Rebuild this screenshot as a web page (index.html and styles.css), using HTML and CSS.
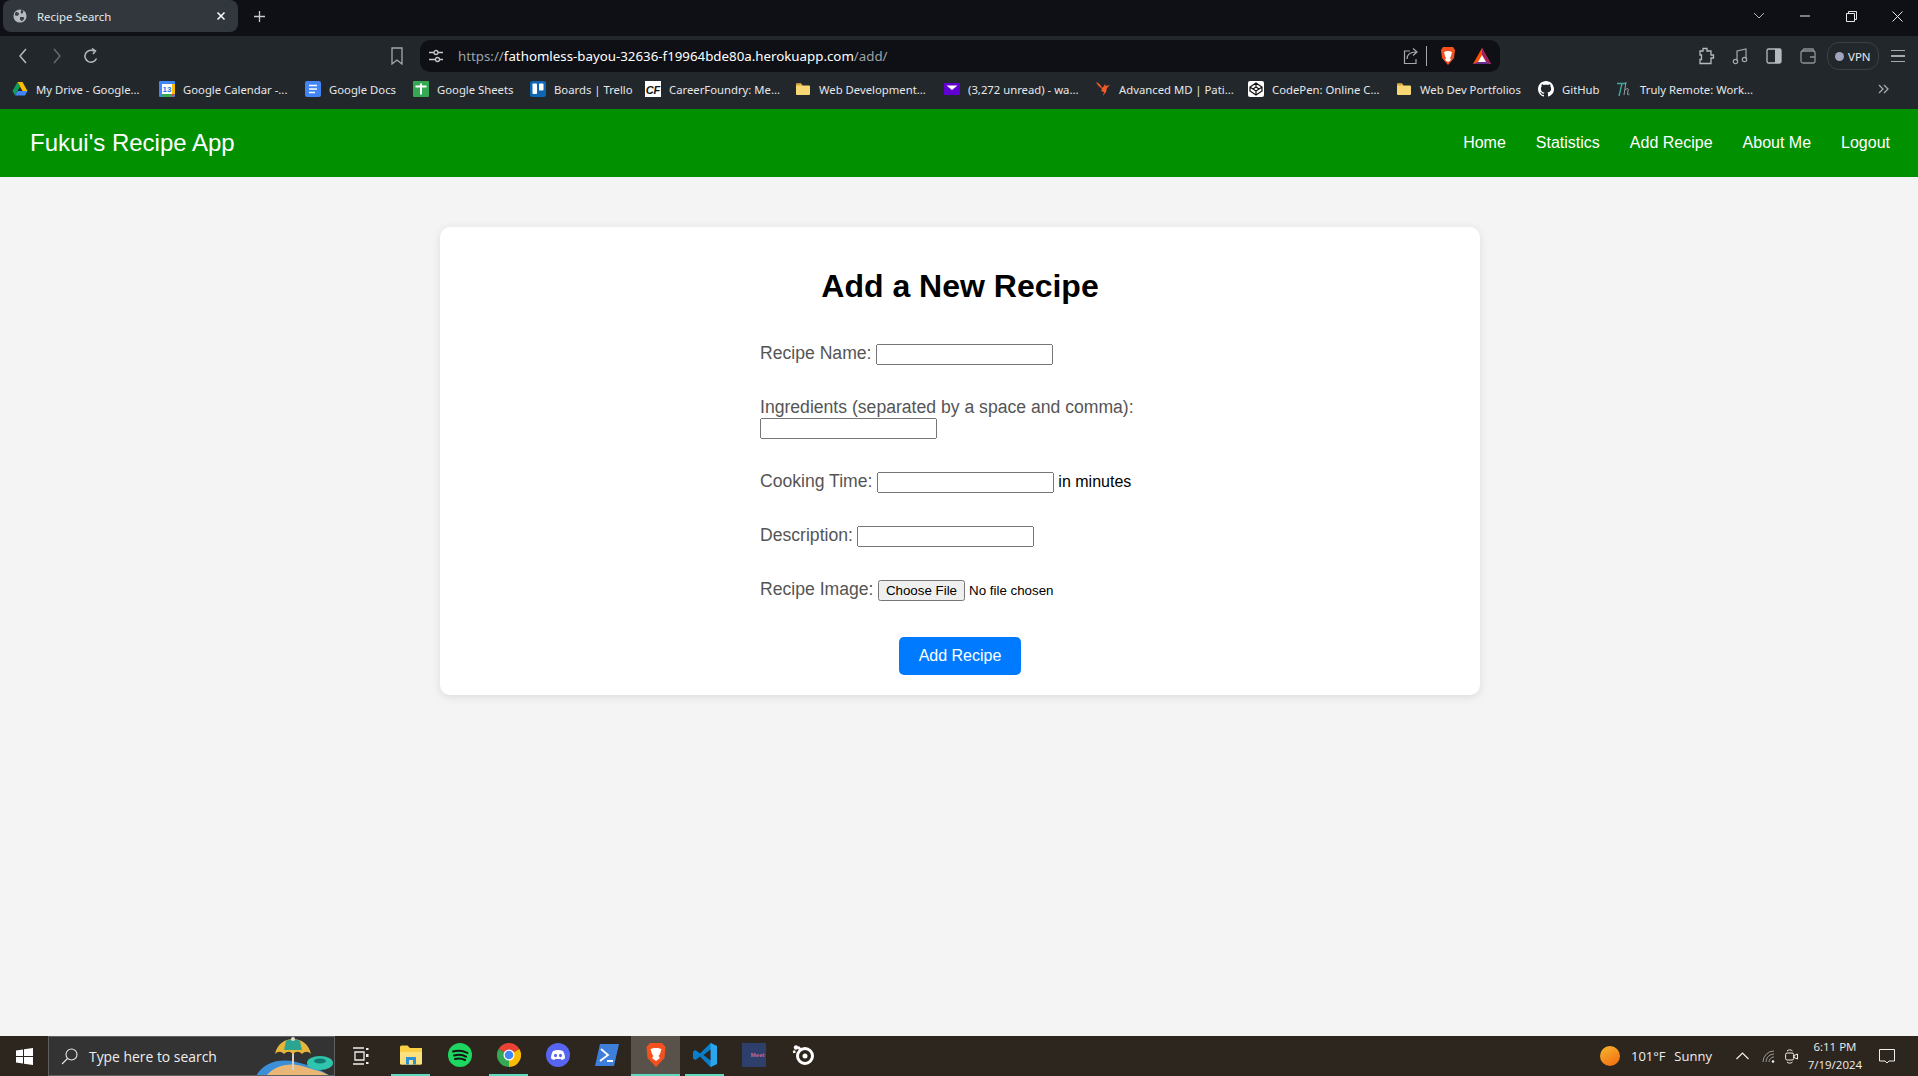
FILE: index.html
```html
<!DOCTYPE html>
<html lang="en">
<head>
    <meta charset="UTF-8">
    <meta name="viewport" content="width=device-width, initial-scale=1.0">
    <title>Recipe Search</title>
    <link rel="stylesheet" href="styles.css">
</head>
<body>

<div class="browser-top">
    <div class="tab-strip">
        <div class="tab">
            <svg class="tab-globe" viewBox="0 0 16 16"><circle cx="8" cy="8" r="7.500" fill="#b5bac0"/><path d="M3 3l3 1 1 2-2 2-3-1zM9 1l3 1-1 3-2 0zM8 9l4 0 1 2-3 3-2-2z" fill="#3a4046"/></svg>
            <span class="tab-title">Recipe Search</span>
            <svg class="tab-close" viewBox="0 0 10 10"><path d="M1.500 1.500l7 7M8.500 1.500l-7 7" stroke="#fff" stroke-width="1.500"/></svg>
        </div>
        <svg class="new-tab" viewBox="0 0 12 12"><path d="M6 0v12M0 6h12" stroke="#c8ccd0" stroke-width="1.400"/></svg>
        <div class="win-controls">
            <span class="win-btn"><svg width="12" height="8" viewBox="0 0 12 8"><path d="M1 1l5 5 5-5" fill="none" stroke="#b5b8bc" stroke-width="1"/></svg></span>
            <span class="win-btn"><svg width="10" height="2" viewBox="0 0 10 2"><path d="M0 1h10" stroke="#e8e8e8"/></svg></span>
            <span class="win-btn"><svg width="11" height="11" viewBox="0 0 11 11"><path d="M.5 2.500h8v8h-8zM2.500 2.500v-2h8v8h-2" fill="none" stroke="#e8e8e8"/></svg></span>
            <span class="win-btn"><svg width="11" height="11" viewBox="0 0 11 11"><path d="M.5.500l10 10M10.500.500l-10 10" stroke="#e8e8e8"/></svg></span>
        </div>
    </div>

    <div class="toolbar">
        <div class="nav-buttons">
            <span class="tool-btn"><svg width="10" height="16" viewBox="0 0 10 16"><path d="M8 1L2 8l6 7" fill="none" stroke="#b5bac0" stroke-width="1.500"/></svg></span>
            <span class="tool-btn"><svg width="10" height="16" viewBox="0 0 10 16"><path d="M2 1l6 7-6 7" fill="none" stroke="#666b70" stroke-width="1.500"/></svg></span>
            <span class="tool-btn"><svg width="16" height="16" viewBox="0 0 16 16"><path d="M13.500 10.500A6 6 0 1 1 11 3" fill="none" stroke="#b5bac0" stroke-width="1.500"/><path d="M9 .5l3.500 2.500L10 6" fill="none" stroke="#b5bac0" stroke-width="1.500"/></svg></span>
        </div>
        <span class="bookmark-btn"><svg width="12" height="18" viewBox="0 0 12 18"><path d="M1 1h10v16l-5-4-5 4z" fill="none" stroke="#a4a9ae" stroke-width="1.300"/></svg></span>
        <div class="address-bar">
            <svg class="site-settings" width="14" height="14" viewBox="0 0 14 14"><path d="M0 3.500h5M9 3.500h5M0 10.500h6M10 10.500h4" stroke="#c4c8cc" stroke-width="1.300"/><circle cx="7" cy="3.500" r="2" fill="none" stroke="#c4c8cc" stroke-width="1.300"/><circle cx="8.500" cy="10.500" r="2" fill="none" stroke="#c4c8cc" stroke-width="1.300"/></svg>
            <span class="url"><span class="url-dim">https://</span>fathomless-bayou-32636-f19964bde80a.herokuapp.com<span class="url-dim">/add/</span></span>
            <svg class="share" width="16" height="18" viewBox="0 0 16 18"><path d="M7 4H1.500v12.500H13V12" fill="none" stroke="#a4a9ae" stroke-width="1.200"/><path d="M4 12c0-5 4-7 9-7M10 1.500l4 3.500-4 3.500" fill="none" stroke="#a4a9ae" stroke-width="1.200"/></svg>
            <span class="addr-sep"></span>
            <svg class="brave-small" width="16" height="20" viewBox="0 0 16 20"><path d="M3 1h10l2 3-1 8-6 7-6-7-1-8z" fill="#f4511e"/><path d="M4 6l3-1h2l3 1-1 4-1 2 1 2-3 2-3-2 1-2-1-2z" fill="#fff"/></svg>
            <svg class="bat" width="18" height="17" viewBox="0 0 18 17"><path d="M9 0l9 16H0z" fill="#ff5000"/><path d="M9 0l9 16-5-2-4-7z" fill="#9e1f63"/><path d="M9 7l4 7H5z" fill="#fff"/><path d="M0 16l5-2h8l5 2z" fill="#662d91"/></svg>
        </div>
        <div class="tool-right">
            <span class="tool-icon"><svg width="17" height="18" viewBox="0 0 17 18"><path d="M2 4h3V1.500h4V4h4v4h2.500v3H13v5.500H2v-4h1.500V8H2z" fill="none" stroke="#b5bac0" stroke-width="1.300"/></svg></span>
            <span class="tool-icon"><svg width="16" height="18" viewBox="0 0 16 18"><path d="M5 14V4l9-2v10" fill="none" stroke="#a4a9ae" stroke-width="1.200"/><circle cx="3.500" cy="14.500" r="2.200" fill="none" stroke="#a4a9ae" stroke-width="1.200"/><circle cx="12.500" cy="12.500" r="2.200" fill="none" stroke="#a4a9ae" stroke-width="1.200"/></svg></span>
            <span class="tool-icon"><svg width="16" height="16" viewBox="0 0 16 16"><rect x="1" y="1" width="14" height="14" rx="1.500" fill="none" stroke="#b5bac0" stroke-width="1.300"/><rect x="9" y="1" width="6" height="14" fill="#b5bac0"/></svg></span>
            <span class="tool-icon"><svg width="16" height="16" viewBox="0 0 16 16"><rect x="1" y="3" width="14" height="12" rx="2" fill="none" stroke="#8d9297" stroke-width="1.300"/><path d="M2 3l2-2h9l1 2M10 9h5" fill="none" stroke="#8d9297" stroke-width="1.300"/></svg></span>
            <span class="vpn"><span class="vpn-dot"></span>VPN</span>
            <span class="menu-icon"><span></span><span></span><span></span></span>
        </div>
    </div>

    <div class="bookmarks">
        <div class="bm">
            <svg viewBox="0 0 16 16"><path d="M5.500 1h5l5 9h-5z" fill="#fbbc04"/><path d="M5.500 1L.5 10 3 14.500 8 5.500z" fill="#0f9d58"/><path d="M3 14.500h10l2.500-4.500H5.500z" fill="#4285f4"/></svg>
            <span>My Drive - Google...</span>
        </div>
        <div class="bm">
            <svg viewBox="0 0 16 16"><rect width="16" height="16" rx="1" fill="#4285f4"/><rect x="3" y="3" width="10" height="10" fill="#fff"/><rect x="13" y="3" width="3" height="10" fill="#fbbc04"/><rect x="3" y="13" width="10" height="3" fill="#34a853"/><path d="M13 13h3l-3 3z" fill="#ea4335"/><text x="8" y="11" class="cal-num">13</text></svg>
            <span>Google Calendar -...</span>
        </div>
        <div class="bm">
            <svg viewBox="0 0 16 16"><rect width="16" height="16" rx="2" fill="#4285f4"/><path d="M4 4.500h8M4 8h8M4 11.500h6" stroke="#fff" stroke-width="1.600"/></svg>
            <span>Google Docs</span>
        </div>
        <div class="bm">
            <svg viewBox="0 0 16 16"><rect width="16" height="16" rx="1" fill="#34a853"/><path d="M2.500 5.500h11M8 2.500v11" stroke="#fff" stroke-width="2"/></svg>
            <span>Google Sheets</span>
        </div>
        <div class="bm">
            <svg viewBox="0 0 16 16"><rect width="16" height="16" rx="2.500" fill="#0c66b4"/><rect x="2.500" y="2.500" width="4.500" height="10.500" rx=".8" fill="#fff"/><rect x="9" y="2.500" width="4.500" height="7" rx=".8" fill="#fff"/></svg>
            <span>Boards | Trello</span>
        </div>
        <div class="bm">
            <svg viewBox="0 0 16 16"><rect width="16" height="16" fill="#fff"/><text x="8" y="12.500" class="cf-mark">CF</text></svg>
            <span>CareerFoundry: Me...</span>
        </div>
        <div class="bm">
            <svg viewBox="0 0 16 16"><path d="M1 3.500A1 1 0 0 1 2 2.500h4l1.500 2H14a1 1 0 0 1 1 1V13a1 1 0 0 1-1 1H2a1 1 0 0 1-1-1z" fill="#f7d774"/><path d="M1 3.500A1 1 0 0 1 2 2.500h4l1.500 2H1z" fill="#dca63f"/></svg>
            <span>Web Development...</span>
        </div>
        <div class="bm">
            <svg viewBox="0 0 16 16"><rect y="2" width="16" height="12" fill="#5f01d1"/><path d="M2.500 4.500h11L8 9z" fill="#fff"/></svg>
            <span>(3,272 unread) - wa...</span>
        </div>
        <div class="bm">
            <svg viewBox="0 0 16 16"><path d="M1 1c3 1 5 3 6 6l2-2 1-2 1 2 4-1-3 3-1 4-3 4 1-4-3-1 1-2C5 6 2 4 1 1z" fill="#f15a29"/></svg>
            <span>Advanced MD | Pati...</span>
        </div>
        <div class="bm">
            <svg viewBox="0 0 16 16"><rect width="16" height="16" rx="2" fill="#fff"/><path d="M8 2l6 4v4l-6 4-6-4V6zM8 6l-3 2 3 2 3-2zM8 2v4M8 10v4M2 6l3 2M14 6l-3 2" fill="none" stroke="#111" stroke-width="1.200"/></svg>
            <span>CodePen: Online C...</span>
        </div>
        <div class="bm">
            <svg viewBox="0 0 16 16"><path d="M1 3.500A1 1 0 0 1 2 2.500h4l1.500 2H14a1 1 0 0 1 1 1V13a1 1 0 0 1-1 1H2a1 1 0 0 1-1-1z" fill="#f7d774"/><path d="M1 3.500A1 1 0 0 1 2 2.500h4l1.500 2H1z" fill="#dca63f"/></svg>
            <span>Web Dev Portfolios</span>
        </div>
        <div class="bm">
            <svg viewBox="0 0 16 16"><path d="M8 0C3.600 0 0 3.600 0 8c0 3.500 2.300 6.500 5.500 7.600.4.100.5-.2.500-.4v-1.400c-2.200.5-2.700-1.100-2.700-1.100-.4-.9-.9-1.200-.9-1.200-.7-.5.100-.5.100-.5.800.1 1.200.8 1.200.8.700 1.200 1.900.9 2.300.7.100-.5.300-.9.500-1.100-1.800-.2-3.600-.9-3.600-4 0-.9.300-1.600.8-2.100-.1-.2-.4-1 .1-2.100 0 0 .7-.2 2.200.8.600-.2 1.300-.3 2-.3s1.400.1 2 .3c1.500-1 2.200-.8 2.200-.8.400 1.100.200 1.900.100 2.100.5.600.8 1.300.8 2.100 0 3.100-1.900 3.700-3.700 3.900.3.300.6.800.6 1.500v2.200c0 .2.100.5.600.4C13.700 14.500 16 11.500 16 8c0-4.400-3.600-8-8-8z" fill="#fff"/></svg>
            <span>GitHub</span>
        </div>
        <div class="bm">
            <svg viewBox="0 0 16 16"><path d="M1 2.500h9M6 2.500L3 15" fill="none" stroke="#3aa8a0" stroke-width="1.400"/><path d="M10 1l-2 13M9 9c2-2 4-2 3 1l-.5 3c0 1 1 1 2 0" fill="none" stroke="#9aa0a6" stroke-width="1"/></svg>
            <span>Truly Remote: Work...</span>
        </div>
        <svg class="bm-more" width="11" height="10" viewBox="0 0 11 10"><path d="M1 1l4 4-4 4M6 1l4 4-4 4" fill="none" stroke="#a4a9ae" stroke-width="1.300"/></svg>
    </div>
</div>

<nav class="navbar">
    <a class="brand" href="#">Fukui's Recipe App</a>
    <div class="nav-links">
        <a href="#">Home</a>
        <a href="#">Statistics</a>
        <a href="#">Add Recipe</a>
        <a href="#">About Me</a>
        <a href="#">Logout</a>
    </div>
</nav>

<main class="page">
    <div class="card">
        <h1>Add a New Recipe</h1>
        <form class="recipe-form">
            <div class="form-row">
                <label for="name">Recipe Name:</label>
                <input id="name" type="text">
            </div>
            <div class="form-row">
                <label for="ingredients">Ingredients (separated by a space and comma):</label>
                <input id="ingredients" type="text">
            </div>
            <div class="form-row">
                <label for="time">Cooking Time:</label>
                <input id="time" type="text"> in minutes
            </div>
            <div class="form-row">
                <label for="description">Description:</label>
                <input id="description" type="text">
            </div>
            <div class="form-row">
                <label for="image">Recipe Image:</label>
                <input id="image" class="file-input" type="file">
            </div>
            <button class="submit-btn" type="button">Add Recipe</button>
        </form>
    </div>
</main>

<footer class="taskbar">
    <span class="start"><svg width="17" height="17" viewBox="0 0 17 17"><path d="M0 2.500L7 1.500v6.500H0zM8 1.300L17 0v8H8zM0 9h7v6.500L0 14.500zM8 9h9v8L8 15.700z" fill="#fff"/></svg></span>
    <div class="search-box">
        <svg class="search-glass" width="17" height="17" viewBox="0 0 17 17"><circle cx="10.500" cy="6.500" r="5.500" fill="none" stroke="#e8e8e8" stroke-width="1.100"/><path d="M6.500 10.500L1 16" stroke="#e8e8e8" stroke-width="1.100"/></svg>
        <span class="search-text">Type here to search</span>
        <svg class="beach" width="78" height="40" viewBox="0 0 78 40"><path d="M0 40c8-14 24-18 40-14 14 3 26 8 34 14z" fill="#3a8fd8"/><path d="M10 40c8-10 22-14 36-10 10 3 22 6 28 10z" fill="#eab676"/><path d="M37 10v24" stroke="#d8d0c8" stroke-width="2"/><path d="M19 18C21 8 29 3 37 3s16 5 18 15c-3-3-6-3-9 0-3-3-6-3-9 0-3-3-6-3-9 0-3-3-6-3-9 0z" fill="#e8b63a"/><path d="M30 5c3-2 11-2 14 0l2 9H28z" fill="#2ba58f"/><circle cx="37" cy="3" r="2" fill="#ddd"/><ellipse cx="64" cy="27" rx="13" ry="7" fill="#2fc4ae"/><ellipse cx="64" cy="25" rx="6" ry="2.500" fill="#127a6f"/></svg>
    </div>
    <span class="task-view"><svg width="16" height="18" viewBox="0 0 16 18"><path d="M0 1h11M0 17h11M2 5h9v8H2z" fill="none" stroke="#eee" stroke-width="1.300"/><rect x="13" y="1" width="2.500" height="2" fill="#eee"/><rect x="13" y="7" width="2.500" height="3" fill="#eee"/><rect x="13" y="15" width="2.500" height="2" fill="#eee"/></svg></span>
    <div class="task-apps">
        <span class="app running">
            <svg width="22" height="20" viewBox="0 0 22 20"><path d="M0 2a1.500 1.500 0 0 1 1.500-1.500h6L10 3h12v15a1.500 1.500 0 0 1-1.500 1.500h-19A1.500 1.500 0 0 1 0 18z" fill="#f9cf45"/><path d="M0 7h22v11a1.500 1.500 0 0 1-1.500 1.500h-19A1.500 1.500 0 0 1 0 18z" fill="#fbe07e"/><rect x="6" y="12" width="10" height="7.500" fill="#2d8fd5"/><rect x="9" y="15" width="4" height="4.500" fill="#fbe07e"/></svg>
        </span>
        <span class="app">
            <svg width="24" height="24" viewBox="0 0 24 24"><circle cx="12" cy="12" r="12" fill="#1ed760"/><path d="M5 8.500c5-1.500 10-1 14.500 1.500M6 12.500c4-1 9-.7 12 1.200M7 16c3.500-.8 7-.5 10 1" fill="none" stroke="#151515" stroke-width="2" stroke-linecap="round"/></svg>
        </span>
        <span class="app running">
            <svg width="24" height="24" viewBox="0 0 24 24"><path d="M12 12L1.600 6A12 12 0 0 1 22.400 6z" fill="#ea4335"/><path d="M12 12l10.400-6A12 12 0 0 1 12 24z" fill="#fbbc04"/><path d="M12 12V24A12 12 0 0 1 1.600 6z" fill="#34a853"/><circle cx="12" cy="12" r="5.500" fill="#fff"/><circle cx="12" cy="12" r="4.300" fill="#4285f4"/></svg>
        </span>
        <span class="app">
            <svg width="24" height="24" viewBox="0 0 24 24"><circle cx="12" cy="12" r="12" fill="#5865f2"/><path d="M7 8c3-1.300 7-1.300 10 0 1.300 2.300 2 4.700 2 7.300-1.200 1-2.500 1.500-3.500 1.700l-.8-1.300c-1.800.5-3.600.5-5.400 0l-.8 1.300c-1-.2-2.300-.7-3.500-1.700C5 12.700 5.700 10.300 7 8z" fill="#fff"/><ellipse cx="9.500" cy="12.500" rx="1.500" ry="1.700" fill="#5865f2"/><ellipse cx="14.500" cy="12.500" rx="1.500" ry="1.700" fill="#5865f2"/></svg>
        </span>
        <span class="app">
            <svg width="24" height="22" viewBox="0 0 24 22"><path d="M5 0h19l-5 22H0z" fill="#3f7fdc"/><path d="M6 5l7 6-8 6M12 17h6" fill="none" stroke="#fff" stroke-width="1.800"/></svg>
        </span>
        <span class="app active">
            <svg width="20" height="24" viewBox="0 0 20 24"><path d="M4 0h12l3.500 4-1 11-8.500 9-8.500-9-1-11z" fill="#f4511e"/><path d="M4.500 6L8 5h4l3.500 1-1.500 5-1.500 2 1.500 2-4 3-4-3 1.500-2L6 11z" fill="#fff"/></svg>
        </span>
        <span class="app running">
            <svg width="24" height="24" viewBox="0 0 24 24"><path d="M17.500 0L24 3v18l-6.500 3L7 13.500 2.500 17 0 15.500V8.500L2.500 7 7 10.500z" fill="#0a7ecb"/><path d="M17.500 0L24 3v18l-6.500 3z" fill="#2aa6ee"/><path d="M17.500 6.500L10.500 12l7 5.500z" fill="#2d261e"/></svg>
        </span>
        <span class="app">
            <span class="meet-tile">Meet</span>
        </span>
        <span class="app">
            <svg width="22" height="22" viewBox="0 0 22 22"><circle cx="13" cy="12" r="7.500" fill="none" stroke="#fff" stroke-width="3"/><circle cx="13" cy="12" r="2.500" fill="#fff"/><path d="M6 3l3 3M3.500 7.500L1 8" stroke="#fff" stroke-width="2.500"/><circle cx="4" cy="3.500" r="2.200" fill="#fff"/></svg>
        </span>
    </div>
    <div class="tray">
        <span class="sun"></span>
        <span class="weather">101°F&nbsp;&nbsp;Sunny</span>
        <svg class="tray-chevron" width="13" height="8" viewBox="0 0 13 8"><path d="M.5 7l6-6 6 6" fill="none" stroke="#eee" stroke-width="1.200"/></svg>
        <svg class="tray-wifi" width="13" height="13" viewBox="0 0 13 13"><path d="M1 12A11 11 0 0 1 12 1M4 12a8 8 0 0 1 8-8M7 12a5 5 0 0 1 5-5" fill="none" stroke="#9a9a9a" stroke-width="1"/><circle cx="11" cy="11.500" r="1.300" fill="#eee"/></svg>
        <svg class="tray-cam" width="13" height="15" viewBox="0 0 13 15"><rect x=".6" y="4" width="8" height="7" rx="1.500" fill="none" stroke="#eee"/><path d="M9 6.500l3.500-1.500v5L9 8.500zM2 2c1.500-1.500 4-1.500 5.500 0M2 13c1.500 1.500 4 1.500 5.500 0" fill="none" stroke="#eee"/></svg>
        <div class="clock">
            <span>6:11 PM</span>
            <span>7/19/2024</span>
        </div>
        <svg class="tray-notify" width="16" height="15" viewBox="0 0 16 15"><path d="M.5.500h15v11.500H10l-2 2-2-2H.5z" fill="none" stroke="#eee"/></svg>
    </div>
</footer>

</body>
</html>
```

FILE: styles.css
```css
* {
    box-sizing: border-box;
}
html, body {
    height: 100%;
}
body {
    margin: 0;
    display: flex;
    flex-direction: column;
    height: 1076px;
    overflow: hidden;
    background-color: #f4f4f4;
    font-family: "Liberation Sans", Arial, sans-serif;
}

/* browser chrome */
.browser-top {
    flex: none;
    height: 109px;
    background: #22272b;
    color: #e6e8ea;
    font-family: "Noto Sans", "Open Sans", sans-serif;
}
.tab-strip {
    display: flex;
    align-items: center;
    height: 36px;
    padding: 0 0 4px 3px;
    background: #0e1015;
}
.tab {
    display: flex;
    align-items: center;
    width: 235px;
    height: 32px;
    padding: 0 10px;
    background: #31373d;
    border-radius: 8px;
    font-size: 11.400px;
}
.tab-globe {
    width: 14px;
    height: 14px;
    margin-right: 10px;
}
.tab-title {
    flex: 1;
}
.tab-close {
    width: 10px;
    height: 10px;
    margin-right: 2px;
}
.new-tab {
    width: 11px;
    height: 11px;
    margin-left: 16px;
}
.win-controls {
    display: flex;
    margin-left: auto;
    margin-right: -2px;
}
.win-btn {
    display: flex;
    align-items: center;
    justify-content: center;
    width: 46px;
    height: 32px;
}

.toolbar {
    display: flex;
    align-items: center;
    height: 40px;
    padding: 0 0 0 6px;
}
.nav-buttons {
    display: flex;
}
.tool-btn {
    display: flex;
    align-items: center;
    justify-content: center;
    width: 34px;
}
.bookmark-btn {
    display: flex;
    margin-left: 283px;
    width: 29px;
}
.address-bar {
    display: flex;
    align-items: center;
    width: 1080px;
    height: 32px;
    padding: 0 9px;
    background: #0e1015;
    border-radius: 10px;
}
.site-settings {
    margin-right: 15px;
}
.url {
    flex: 1;
    font-size: 13.300px;
    color: #fff;
    white-space: nowrap;
}
.url-dim {
    color: #9ea3a8;
}
.addr-sep {
    width: 1px;
    height: 20px;
    margin: 0 13px 0 7px;
    background: #a4a9ae;
}
.bat {
    margin: 0 0 0 17px;
}
.tool-right {
    display: flex;
    align-items: center;
    margin-left: 189px;
}
.tool-icon {
    display: flex;
    justify-content: center;
    width: 34px;
}
.vpn {
    display: flex;
    align-items: center;
    gap: 4px;
    width: 52px;
    height: 28px;
    padding-left: 7px;
    margin-left: 2px;
    border: 1px solid #3a4046;
    border-radius: 12px;
    font-size: 11.500px;
}
.vpn-dot {
    width: 9px;
    height: 9px;
    border-radius: 50%;
    background: #a0a4bc;
}
.menu-icon {
    display: flex;
    flex-direction: column;
    gap: 4px;
    width: 14px;
    margin-left: 12px;
}
.menu-icon span {
    height: 1.500px;
    background: #a4a9ae;
}

.bookmarks {
    display: grid;
    grid-template-columns: 147px 146px 108px 117px 115px 150px 149px 151px 153px 148px 142px 78px 140px 1fr;
    align-items: center;
    height: 33px;
    padding: 0 0 7px 12px;
    font-size: 11.300px;
}
.bm {
    display: flex;
    align-items: center;
    gap: 8px;
    white-space: nowrap;
    overflow: hidden;
}
.bm svg {
    flex: none;
    width: 16px;
    height: 16px;
}
.cal-num {
    font: bold 8px "Liberation Sans", sans-serif;
    fill: #1a73e8;
    text-anchor: middle;
}
.cf-mark {
    font: italic bold 11px "Liberation Sans", sans-serif;
    fill: #111;
    text-anchor: middle;
}
.bm-more {
    justify-self: end;
    margin-right: 29px;
}

/* site nav */
.navbar {
    flex: none;
    display: flex;
    align-items: center;
    justify-content: space-between;
    height: 68px;
    padding: 0 28px 0 30px;
    background: #009000;
}
.navbar a {
    color: #fff;
    text-decoration: none;
}
.brand {
    font-size: 24px;
}
.nav-links {
    display: flex;
    gap: 30px;
    font-size: 16px;
}

/* form card */
.page {
    flex: 1;
    display: flex;
    flex-direction: column;
    align-items: center;
    padding: 50px 0 0 2px;
}
.card {
    width: 1040px;
    padding: 20px;
    background: #fff;
    border-radius: 10px;
    box-shadow: 0 2px 10px rgba(0, 0, 0, 0.1);
}
h1 {
    margin: 21px 0 38px;
    font-size: 32px;
    text-align: center;
    color: #000;
}
.recipe-form {
    display: flex;
    flex-direction: column;
    width: 400px;
    margin: 0 auto;
    font-size: 16px;
}
.form-row {
    margin-bottom: 32px;
}
.form-row label {
    font-size: 17.600px;
    color: #555;
}
.form-row input[type="text"] {
    width: 177px;
}
.file-input {
    width: 190px;
    font-family: "Liberation Sans", Arial, sans-serif;
}
.submit-btn {
    align-self: center;
    width: 122px;
    height: 38px;
    margin-top: 4px;
    border: none;
    border-radius: 5px;
    background: #007bff;
    color: #fff;
    font-family: inherit;
    font-size: 16px;
}

/* windows taskbar */
.taskbar {
    flex: none;
    display: flex;
    align-items: center;
    height: 40px;
    background: #2d261e;
    color: #eee;
    font-family: "Open Sans", "Noto Sans", sans-serif;
}
.start {
    display: flex;
    justify-content: center;
    width: 48px;
}
.search-box {
    display: flex;
    align-items: center;
    width: 287px;
    height: 40px;
    padding-left: 12px;
    background: #333;
    border: 1px solid #5f5f5f;
    overflow: hidden;
}
.search-glass {
    margin-right: 11px;
}
.search-text {
    flex: 1;
    font-size: 13.900px;
    white-space: nowrap;
}
.beach {
    flex: none;
}
.task-view {
    display: flex;
    justify-content: center;
    width: 51px;
}
.task-apps {
    display: flex;
    height: 40px;
}
.app {
    display: flex;
    align-items: center;
    justify-content: center;
    width: 49px;
    height: 40px;
    border-bottom: 2px solid transparent;
}
.running {
    position: relative;
}
.running::after {
    content: "";
    position: absolute;
    bottom: -2px;
    left: 5px;
    right: 5px;
    height: 2px;
    background: #5fd8c0;
}
.active {
    background: #58524a;
    border-bottom: 2px solid #5fd8c0;
}
.meet-tile {
    display: flex;
    align-items: center;
    justify-content: flex-end;
    width: 24px;
    height: 24px;
    padding-right: 1px;
    background: #2e3f6b;
    color: #c2678f;
    font-family: "Liberation Sans", sans-serif;
    font-size: 6px;
    font-weight: bold;
}
.tray {
    flex: 1;
    display: flex;
    align-items: center;
    padding-left: 773px;
}
.sun {
    flex: none;
    width: 20px;
    height: 20px;
    border-radius: 50%;
    background: linear-gradient(150deg, #f6b82e, #f2690f);
}
.weather {
    margin-left: 11px;
    font-size: 13px;
    word-spacing: 1px;
    white-space: nowrap;
}
.tray-chevron {
    margin-left: 24px;
}
.tray-wifi {
    margin-left: 13px;
}
.tray-cam {
    margin-left: 10px;
}
.clock {
    display: flex;
    flex-direction: column;
    align-items: center;
    width: 66px;
    margin-left: 4px;
    font-size: 11.500px;
    line-height: 18px;
}
.tray-notify {
    margin-left: 11px;
}
```
